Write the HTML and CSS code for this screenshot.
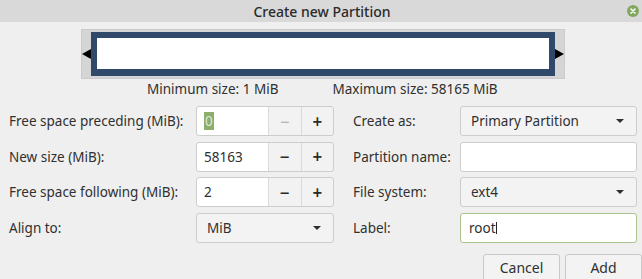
FILE: index.html
```html
<!DOCTYPE html>
<html>
<head>
  <title>Create new Partition</title>
  <link rel="stylesheet" href="styles.css">
</head>
<body>
  <div class="titlebar">
    <span class="title">Create new Partition</span>
    <span class="close">
      <svg width="12" height="12" viewBox="0 0 12 12"><circle cx="6" cy="6" r="6" fill="#82a85f"/><path d="M4 4 L8 8 M8 4 L4 8" stroke="#fff" stroke-width="1.6" stroke-linecap="round"/></svg>
    </span>
  </div>

  <div class="content">
    <!-- partition size slider -->
    <div class="bar-frame">
      <span class="handle handle-left"></span>
      <div class="bar"><div class="bar-fill"></div></div>
      <span class="handle handle-right"></span>
    </div>

    <div class="sizes">
      <span>Minimum size: 1 MiB</span>
      <span>Maximum size: 58165 MiB</span>
    </div>

    <div class="form">
      <label class="label">Free space preceding (MiB):</label>
      <div class="spin">
        <div class="spin-entry"><span class="selected">0</span></div>
        <span class="spin-btn disabled">&minus;</span>
        <span class="spin-btn">+</span>
      </div>
      <label class="label label-right">Create as:</label>
      <div class="combo"><span>Primary Partition</span><span class="arrow"></span></div>

      <label class="label">New size (MiB):</label>
      <div class="spin">
        <div class="spin-entry">58163</div>
        <span class="spin-btn">&minus;</span>
        <span class="spin-btn">+</span>
      </div>
      <label class="label label-right">Partition name:</label>
      <div class="entry"></div>

      <label class="label">Free space following (MiB):</label>
      <div class="spin">
        <div class="spin-entry">2</div>
        <span class="spin-btn">&minus;</span>
        <span class="spin-btn">+</span>
      </div>
      <label class="label label-right">File system:</label>
      <div class="combo"><span>ext4</span><span class="arrow"></span></div>

      <label class="label">Align to:</label>
      <div class="combo"><span>MiB</span><span class="arrow"></span></div>
      <label class="label label-right">Label:</label>
      <div class="entry focused">root<span class="cursor"></span></div>
    </div>

    <div class="actions">
      <button class="btn">Cancel</button>
      <button class="btn">Add</button>
    </div>
  </div>
</body>
</html>
```

FILE: styles.css
```css
body {
  margin: 0;
  font-family: 'Noto Sans', sans-serif;
  font-size: 13.5px;
  color: #303030;
  background-color: #efefef;
  width: 642px;
  height: 279px;
  overflow: hidden;
}
.titlebar {
  position: relative;
  height: 22px;
  background-color: #d9d9d9;
  display: flex;
  justify-content: center;
  align-items: center;
}
.title {
  font-size: 14px;
  font-weight: 500;
  color: #2a2a2a;
  margin-left: 2px;
}
.close {
  position: absolute;
  right: 3px;
  top: 5px;
  display: flex;
}
.content {
  padding-top: 7px;
}
/* slider frame with the two resize handles */
.bar-frame {
  display: flex;
  align-items: center;
  width: 482px;
  height: 45px;
  margin-left: 81px;
  padding: 1px 0 2px;
  background-color: #d5d5d5;
  border: 1px solid #cbcbcb;
}
.handle {
  width: 0;
  height: 0;
  border-top: 5.5px solid transparent;
  border-bottom: 5.5px solid transparent;
}
.handle-left {
  border-right: 9px solid #000;
}
.handle-right {
  border-left: 9px solid #000;
}
.bar {
  flex: 1;
  height: 44px;
  box-sizing: border-box;
  border: 6px solid #30496a;
  border-bottom-width: 7px;
  background-color: #fff;
}
.sizes {
  display: flex;
  gap: 54px;
  padding-left: 147px;
  height: 20px;
  align-items: center;
}
.form {
  display: grid;
  grid-template-columns: 187px 138px 126px 177px;
  grid-auto-rows: 30px;
  row-gap: 5.5px;
  padding-left: 9px;
  margin-top: 7px;
}
.label {
  display: flex;
  align-items: center;
}
.label-right {
  padding-left: 19px;
}
.spin {
  display: flex;
  border: 1px solid #cdcdcd;
  border-radius: 3px;
  background-color: #f2f2f2;
  box-sizing: border-box;
}
.spin-entry {
  width: 64px;
  padding-left: 7px;
  display: flex;
  align-items: center;
  background-color: #fff;
  border-right: 1px solid #dadada;
  border-radius: 3px 0 0 3px;
}
.selected {
  background-color: #8eae6d;
  color: #dfe9d3;
  padding: 0 1px;
  line-height: 18px;
}
.spin-btn {
  flex: 1;
  display: flex;
  align-items: center;
  justify-content: center;
  font-size: 17px;
  font-weight: 600;
  color: #2a2a2a;
}
.spin-btn + .spin-btn {
  border-left: 1px solid #dadada;
}
.spin-btn.disabled {
  color: #a9a9a9;
  font-weight: 400;
}
.combo {
  display: flex;
  align-items: center;
  justify-content: space-between;
  padding: 0 12px 0 10px;
  border: 1px solid #cdcdcd;
  border-radius: 3px;
  background-color: #f3f3f3;
  box-sizing: border-box;
}
.arrow {
  width: 0;
  height: 0;
  border-left: 4px solid transparent;
  border-right: 4px solid transparent;
  border-top: 4px solid #2f2f2f;
}
.entry {
  display: flex;
  align-items: center;
  padding-left: 8px;
  background-color: #fff;
  border: 1px solid #cdcdcd;
  border-radius: 3px;
  box-sizing: border-box;
}
.entry.focused {
  border-color: #a8c38c;
}
.cursor {
  display: inline-block;
  width: 1px;
  height: 12px;
  background-color: #222;
}
.actions {
  display: flex;
  justify-content: flex-end;
  gap: 5px;
  margin-top: 11px;
}
.btn {
  font-family: inherit;
  font-size: 14px;
  color: #303030;
  width: 77px;
  height: 34px;
  padding: 0 0 6px;
  background-color: #f3f3f3;
  border: 1px solid #c9c9c9;
  border-radius: 3px;
}
```
